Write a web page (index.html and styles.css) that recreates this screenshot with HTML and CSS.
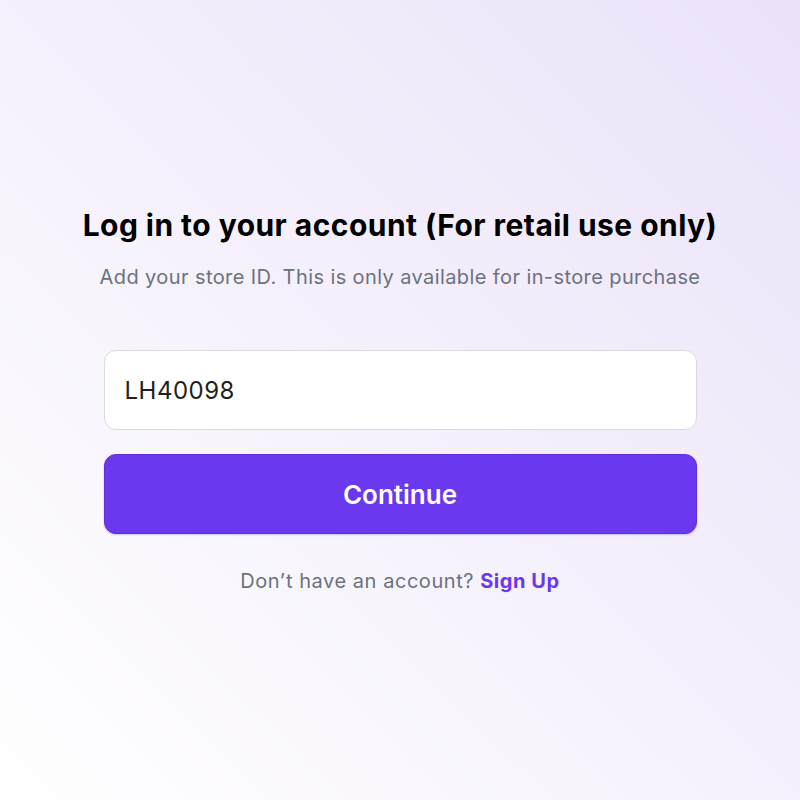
FILE: index.html
```html
<!DOCTYPE html>
<html lang="en">
<head>
<meta charset="utf-8">
<link rel="stylesheet" href="styles.css">
</head>
<body>
<main class="page">
  <section class="card">
    <h1 class="title">Log in to your account (For retail use only)</h1>
    <p class="subtitle">Add your store ID. This is only available for in-store purchase</p>
    <form class="form">
      <input class="field" type="text" value="LH40098">
      <button class="btn" type="button">Continue</button>
    </form>
    <p class="footer">Don’t have an account? <a class="link" href="#">Sign Up</a></p>
  </section>
</main>
</body>
</html>
```
FILE: styles.css
```css
* { box-sizing: border-box; }
html, body { margin: 0; height: 100%; }
body {
  font-family: Inter, "Noto Sans", sans-serif;
  background: linear-gradient(45deg, #ffffff 0%, #f6f2fc 45%, #ebe2f9 100%);
}
.page {
  height: 800px;
  display: flex;
  justify-content: center;
  padding-top: 205px;
}
.card {
  width: 593px;
  display: flex;
  flex-direction: column;
  align-items: center;
}
.title {
  margin: 0;
  font-size: 30px;
  font-weight: 700;
  color: #000;
  white-space: nowrap;
  line-height: 40px;
  letter-spacing: 0.45px;
}
.subtitle {
  margin: 18px 0 0;
  font-size: 20px;
  line-height: 28px;
  color: #6b7280;
  white-space: nowrap;
  letter-spacing: 0.4px;
}
.form {
  margin-top: 59px;
  width: 100%;
  display: flex;
  flex-direction: column;
  gap: 24px;
}
.field {
  width: 100%;
  height: 80px;
  border: 1.5px solid #dadade;
  border-radius: 12px;
  background: #fff;
  padding: 0 20px;
  font-family: inherit;
  font-size: 24px;
  letter-spacing: 0.5px;
  color: #1f1f23;
  outline: none;
}
.btn {
  width: 100%;
  height: 80px;
  border: 1px solid #5b30d9;
  border-radius: 12px;
  background: #6a38ef;
  color: #fff;
  font-family: inherit;
  font-size: 26px;
  font-weight: 600;
  box-shadow: 0 1px 2px rgba(60, 30, 150, 0.25);
}
.footer {
  margin: 33px 0 0;
  font-size: 20px;
  line-height: 28px;
  color: #6b7280;
  letter-spacing: 0.55px;
}
.link {
  color: #6a38ef;
  font-weight: 700;
  text-decoration: none;
}
```
